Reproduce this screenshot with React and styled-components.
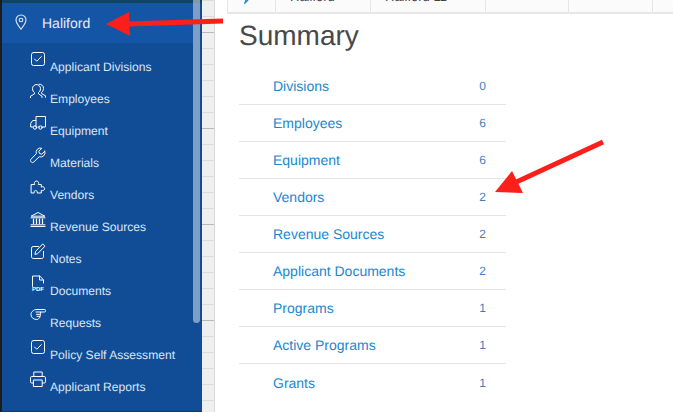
import React from 'react'
import styled, { createGlobalStyle } from 'styled-components'

const Global = createGlobalStyle`
  html, body {
    margin: 0;
    height: 100%;
    overflow: hidden;
    background: #fff;
    font-family: "Liberation Sans", Arial, sans-serif;
    text-rendering: geometricPrecision;
  }
`

const Page = styled.div`
  position: relative;
  display: flex;
  width: 673px;
  height: 412px;
  overflow: hidden;
  background: #1b1d1f;
  padding-left: 2px;
  box-sizing: border-box;
`

const Sidebar = styled.aside`
  position: relative;
  width: 200px;
  flex: none;
  display: flex;
  flex-direction: column;
  background: #114d96;
  border-top: 3px solid #0f4560;
  border-bottom: 1px solid #0d3a70;
  box-sizing: border-box;
`

const Header = styled.div`
  display: flex;
  align-items: center;
  gap: 14px;
  height: 40px;
  width: 191px;
  padding-left: 12px;
  box-sizing: border-box;
  background: #1555a6;
  color: #e8eefa;
  font-size: 14px;
  svg { margin-top: -2px; }
`

const Menu = styled.nav`
  display: flex;
  flex-direction: column;
  padding-top: 8px;
`

const Item = styled.div`
  display: flex;
  align-items: flex-start;
  height: 32px;
  padding-left: 28px;
  box-sizing: border-box;
  color: #dbe5f5;
`

const Label = styled.span`
  margin-left: 4px;
  margin-top: 9px;
  font-size: 12.1px;
  line-height: 14px;
  white-space: nowrap;
`

const Thumb = styled.div`
  position: absolute;
  top: -3px;
  left: 191px;
  width: 7px;
  height: 323px;
  border-radius: 0 0 4px 4px;
  background: rgba(255, 255, 255, 0.46);
`

const Gutter = styled.div`
  width: 13px;
  flex: none;
  box-sizing: border-box;
  border-right: 1px solid #d9d9d9;
  background-color: #efefef;
  background-image:
    linear-gradient(#b8b8b8 1px, transparent 1px),
    linear-gradient(#dcdcdc 1px, transparent 1px);
  background-size: 100% 96px, 100% 16px;
  background-position: 0 32px, 0 0;
`

const Content = styled.main`
  flex: 1;
  background: #fff;
  padding-left: 12px;
  min-width: 0;
`

const TopRow = styled.div`
  display: flex;
  height: 14px;
  background: #fbfbfb;
  border-bottom: 2px solid #e6e6e6;
  border-left: 1px solid #e6e6e6;
  overflow: hidden;
  box-sizing: border-box;
`

const TopCell = styled.div`
  width: ${(props) => props.$width}px;
  flex: none;
  box-sizing: border-box;
  border-right: 1px solid #e6e6e6;
  padding-left: ${(props) => props.$pad || 14}px;
  margin-top: -10px;
  height: 30px;
  font-size: 13px;
  line-height: 13px;
  color: #444;
  white-space: nowrap;
`

const Body = styled.div`
  padding-left: 12px;
`

const Title = styled.h1`
  margin: 4px 0 0;
  height: 36px;
  font-size: 28px;
  font-weight: 400;
  line-height: 36px;
  color: #484848;
`

const SummaryList = styled.div`
  width: 267px;
  margin-top: 14px;
`

const Row = styled.div`
  display: flex;
  align-items: center;
  justify-content: space-between;
  height: 37px;
  padding: 0 20px 0 34px;
  box-sizing: border-box;
  border-bottom: ${(props) => (props.$last ? 'none' : '1px solid #e4e4e4')};
`

const RowName = styled.a`
  font-size: 14px;
  color: #1b87cf;
`

const RowCount = styled.span`
  font-size: 12px;
  color: #3a7fc6;
`

const Arrow = styled.svg`
  position: absolute;
  top: 0;
  left: 0;
  pointer-events: none;
`

const Glyph = ({ children }) => (
  <svg width="16" height="17" viewBox="0 0 16 17" fill="none" stroke="#fff" strokeWidth="1" strokeLinecap="round" strokeLinejoin="round" style={{ flex: 'none' }}>
    {children}
  </svg>
)

const CheckIcon = () => (
  <Glyph>
    <rect x="1.5" y="1.5" width="13" height="13" rx="2" />
    <path d="M4.5 8l2.3 2.3 4.4-4.6" />
  </Glyph>
)

const PeopleIcon = () => (
  <Glyph>
    <path d="M6.500 1.500a4 4 0 0 1 4 4.200c0 1.800-1 3.300-2 4v1.200l3.500 2.200v1.400M6.500 1.500a4 4 0 0 0-4 4.200c0 1.800 1 3.300 2 4v1.200L.5 13.200v1.400" />
    <path d="M9 1.200a4 4 0 0 1 4.500 4.300c0 1.800-.9 3.200-1.900 3.900v1.200l3.900 2.200v1.400" />
  </Glyph>
)

const TruckIcon = () => (
  <Glyph>
    <path d="M6 5.500V1.500h9.500V12H12M8 12h1.500M3 12H.7V8.500l2-3H6V12" />
    <circle cx="5" cy="12.500" r="1.700" />
    <circle cx="10.500" cy="12.500" r="1.700" />
  </Glyph>
)

const WrenchIcon = () => (
  <Glyph>
    <path d="M14.800 4.200l-3 3-2.300-.7-.7-2.200 3-3a4.300 4.300 0 0 0-5.500 5.400L.9 12.300a1.700 1.700 0 0 0 0 2.300l.5.500a1.700 1.700 0 0 0 2.300 0l5.600-5.400a4.300 4.300 0 0 0 5.500-5.500z" />
  </Glyph>
)

const PuzzleIcon = () => (
  <Glyph>
    <path d="M1.500 5.500h3.200c-.7-1-.5-3.500 1.800-3.500s2.500 2.500 1.800 3.500h3v2.600c1-.7 3.300-.5 3.300 1.600s-2.300 2.300-3.300 1.600v2.700H7.200c.5-1.400-.2-2.400-1.500-2.400s-2 1-1.500 2.400H1.500z" />
  </Glyph>
)

const BankIcon = () => (
  <Glyph>
    <path d="M1.500 5L8 1.500 14.500 5zM1 6.800h14M1 13.800h14M1 15.500h14" />
    <path d="M3.500 8.200v4.200M6.500 8.200v4.200M9.500 8.200v4.200M12.500 8.200v4.200" strokeWidth="1.200" />
  </Glyph>
)

const NoteIcon = () => (
  <Glyph>
    <path d="M8.500 3.500H3.200a1.700 1.700 0 0 0-1.700 1.700v8.600c0 .9.8 1.700 1.700 1.700h8.600c1 0 1.700-.8 1.700-1.700V8.500" />
    <path d="M13 1.200l2 2-7.500 7.600-2.600.6.6-2.600z" />
  </Glyph>
)

const PdfIcon = () => (
  <Glyph>
    <path d="M2.500 11.500V1h7.200l3.800 3.800v3.200M9.500 1v4h4" />
    <text x="2" y="16" fontSize="6" fontWeight="700" fill="#fff" stroke="none" fontFamily="Liberation Sans">PDF</text>
  </Glyph>
)

const HandIcon = () => (
  <Glyph>
    <path d="M6.500 2.500h8.300c1.300 0 1.300 2.500-.2 2.500H10.500c.4.900.2 1.700-.2 2.300.4.700.2 1.500-.4 2 .2.900-.2 1.600-1 1.900-.4 1-1.100 1.300-2.100 1.300-3.200 0-5.800-1.800-5.800-5 0-1.800.8-2.800 1.900-3.600C4 3 5 2.500 6.500 2.500z" />
    <path d="M6.500 7.300h3.800M7 9.300h2.900M6 5h4.500" />
  </Glyph>
)

const PrinterIcon = () => (
  <Glyph>
    <path d="M3.800 5.500V1h8.400v4.500M3.500 12H1.700A1.200 1.200 0 0 1 .5 10.800V6.700c0-.7.5-1.200 1.200-1.200h12.600c.7 0 1.200.5 1.200 1.200v4.100c0 .7-.5 1.200-1.200 1.200h-1.800" />
    <rect x="3.800" y="9" width="8.400" height="6.500" />
  </Glyph>
)

const PinIcon = () => (
  <svg width="14" height="16" viewBox="0 0 14 16" fill="none" stroke="#dce6f7" strokeWidth="1.100">
    <path d="M7 15.200C4.500 11.800 2 9 2 6a5 5 0 0 1 10 0c0 3-2.500 5.800-5 9.200z" />
    <circle cx="7" cy="6" r="1.800" />
  </svg>
)

const PencilGlyph = () => (
  <svg width="10" height="14" viewBox="0 0 10 14" fill="none" stroke="#1b87cf" strokeWidth="1.300">
    <path d="M1 13l1-3.500L8 3l1 1-6 7z" />
  </svg>
)

const menu = [
  { name: 'Applicant Divisions', Icon: CheckIcon },
  { name: 'Employees', Icon: PeopleIcon },
  { name: 'Equipment', Icon: TruckIcon },
  { name: 'Materials', Icon: WrenchIcon },
  { name: 'Vendors', Icon: PuzzleIcon },
  { name: 'Revenue Sources', Icon: BankIcon },
  { name: 'Notes', Icon: NoteIcon },
  { name: 'Documents', Icon: PdfIcon },
  { name: 'Requests', Icon: HandIcon },
  { name: 'Policy Self Assessment', Icon: CheckIcon },
  { name: 'Applicant Reports', Icon: PrinterIcon },
]

const rows = [
  ['Divisions', 0],
  ['Employees', 6],
  ['Equipment', 6],
  ['Vendors', 2],
  ['Revenue Sources', 2],
  ['Applicant Documents', 2],
  ['Programs', 1],
  ['Active Programs', 1],
  ['Grants', 1],
]

export default function App() {
  return (
    <Page>
      <Global />
      <Sidebar>
        <Header>
          <PinIcon />
          Haliford
        </Header>
        <Menu>
          {menu.map(({ name, Icon }) => (
            <Item key={name}>
              <Icon />
              <Label>{name}</Label>
            </Item>
          ))}
        </Menu>
        <Thumb />
      </Sidebar>
      <Gutter />
      <Content>
        <TopRow>
          <TopCell $width={48} $pad={16}>
            <PencilGlyph />
          </TopCell>
          <TopCell $width={95}>Haliford</TopCell>
          <TopCell $width={115}>Haliford 11</TopCell>
          <TopCell $width={83} />
          <TopCell $width={84} />
          <TopCell $width={21} />
        </TopRow>
        <Body>
          <Title>Summary</Title>
          <SummaryList>
            {rows.map(([name, count], i) => (
              <Row key={name} $last={i === rows.length - 1}>
                <RowName>{name}</RowName>
                <RowCount>{count}</RowCount>
              </Row>
            ))}
          </SummaryList>
        </Body>
      </Content>
      <Arrow width="673" height="412" viewBox="0 0 673 412">
        <path d="M223 21L128 24" stroke="#fc1f1a" strokeWidth="5" />
        <polygon points="106,24 129,12 130,36" fill="#fc1f1a" />
        <path d="M603 142L512 184" stroke="#fc1f1a" strokeWidth="5" />
        <polygon points="495,192 512,171 523,193" fill="#fc1f1a" />
      </Arrow>
    </Page>
  )
}
